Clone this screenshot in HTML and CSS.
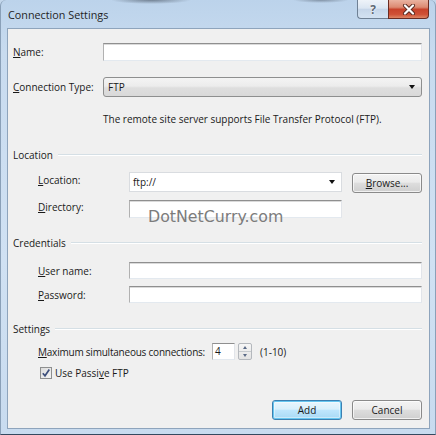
FILE: index.html
```html
<!DOCTYPE html>
<html>
<head>
<meta charset="utf-8">
<link rel="stylesheet" href="styles.css">
</head>
<body>
<div class="window">
  <div class="titlebar">
    <span class="title">Connection Settings</span>
    <div class="caption">
      <div class="cap-btn help">?</div>
      <div class="cap-btn close">
        <svg width="14" height="11" viewBox="0 0 14 11">
          <path d="M3 1.5 L11 9.5 M11 1.5 L3 9.5" stroke="#5a2a20" stroke-width="4" stroke-linecap="round"/>
          <path d="M3 1.5 L11 9.5 M11 1.5 L3 9.5" stroke="#ffffff" stroke-width="2.2" stroke-linecap="round"/>
        </svg>
      </div>
    </div>
  </div>
  <div class="client">
    <div class="row row-name">
      <span class="lbl"><u>N</u>ame:</span>
      <div class="textbox grow"></div>
    </div>
    <div class="row row-type">
      <span class="lbl"><u>C</u>onnection Type:</span>
      <div class="select grow"><span>FTP</span><i class="arrow"></i></div>
    </div>
    <p class="desc">The remote site server supports File Transfer Protocol (FTP).</p>

    <div class="group group-loc"><span>Location</span><span class="rule"></span></div>
    <div class="row sub row-loc">
      <span class="lbl2"><u>L</u>ocation:</span>
      <div class="combo"><span>ftp://</span><i class="arrow"></i></div>
      <div class="btn browse"><span><u>B</u>rowse...</span></div>
    </div>
    <div class="row sub row-dir">
      <span class="lbl2"><u>D</u>irectory:</span>
      <div class="textbox short"></div>
    </div>

    <div class="group group-cred"><span>Credentials</span><span class="rule"></span></div>
    <div class="row sub row-user">
      <span class="lbl2"><u>U</u>ser name:</span>
      <div class="textbox grow"></div>
    </div>
    <div class="row sub row-pass">
      <span class="lbl2"><u>P</u>assword:</span>
      <div class="textbox grow"></div>
    </div>

    <div class="group group-set"><span>Settings</span><span class="rule"></span></div>
    <div class="row sub row-max">
      <span class="lbl-max"><u>M</u>aximum simultaneous connections:</span>
      <div class="spin-box">4</div>
      <div class="spin-btns">
        <div class="spin-up"><i class="tri-up"></i></div>
        <div class="spin-down"><i class="tri-down"></i></div>
      </div>
      <span class="range">(1-10)</span>
    </div>
    <div class="row sub row-chk">
      <span class="checkbox">
        <svg width="10" height="10" viewBox="0 0 10 10"><path d="M1.8 5.2 L4 7.8 L8.3 1.6" fill="none" stroke="#3d4f7c" stroke-width="1.7"/></svg>
      </span>
      <span>Use Passi<u>v</u>e FTP</span>
    </div>

    <div class="buttons">
      <div class="btn default"><span>Add</span></div>
      <div class="btn"><span>Cancel</span></div>
    </div>

    <div class="watermark">DotNetCurry.com</div>
  </div>
</div>
</body>
</html>
```

FILE: styles.css
```css
* { box-sizing: border-box; }
html, body { margin: 0; padding: 0; }
body {
  width: 436px;
  height: 435px;
  overflow: hidden;
  font-family: "Open Sans", "Noto Sans", sans-serif;
  font-size: 10px;
  color: #1a1a1a;
  background: #c3d7ec;
}
u { text-decoration: underline; text-underline-offset: 1px; }

.window {
  width: 436px;
  height: 435px;
  display: flex;
  flex-direction: column;
  border: 1px solid #8aa0b8;
  border-top: none;
  border-bottom-color: #34495f;
  border-radius: 6px 6px 0 0;
  background:
    radial-gradient(ellipse 40px 4px at 150px 0, rgba(40,48,60,0.5), rgba(40,48,60,0) 100%),
    radial-gradient(ellipse 28px 3px at 320px 0, rgba(40,48,60,0.4), rgba(40,48,60,0) 100%),
    linear-gradient(180deg, #bcd3eb 0%, #c8dbef 12%, #d0e1f3 60%, #c8dbef 100%);
}

.titlebar {
  height: 28px;
  flex: none;
  display: flex;
  justify-content: space-between;
  align-items: flex-start;
  padding-left: 7px;
}
.title {
  font-size: 10.8px;
  line-height: 14px;
  margin-top: 8px;
  color: #1e1e1e;
}
.caption { display: flex; margin-right: 6px; }
.cap-btn {
  height: 19px;
  display: flex;
  align-items: center;
  justify-content: center;
}
.help {
  width: 31px;
  border: 1px solid #6f8195;
  border-top: none;
  border-right: none;
  border-radius: 0 0 0 4px;
  background: linear-gradient(180deg, #eef3f9 0%, #dbe6f2 45%, #c6d6e9 52%, #d3e2f2 100%);
  font-weight: 700;
  font-size: 12px;
  color: #5d6875;
  text-shadow: 0 0 2px #fff, 0 0 1px #fff;
}
.close {
  width: 41px;
  border: 1px solid #6a2c22;
  border-top: none;
  border-radius: 0 0 4px 0;
  background: linear-gradient(180deg, #eab3a1 0%, #dc8a72 40%, #c8432b 52%, #cf5136 80%, #de8564 100%);
}

.client {
  flex: none;
  height: 401px;
  margin: 0 5px 0 6px;
  border: 1px solid #8ea4bc;
  background: #f0f0f0;
  padding: 0 7px 0 5px;
  position: relative;
  display: flex;
  flex-direction: column;
  white-space: nowrap;
}

.row { display: flex; align-items: center; flex: none; }
.sub { padding-left: 25px; }
.lbl { width: 90px; flex: none; }
.lbl2 { width: 91px; flex: none; }
.grow { flex: 1; }

.row-name { margin-top: 14px; height: 18px; }
.row-type { margin-top: 16px; height: 20px; }
.desc { margin: 15px 0 0 90px; height: 14px; line-height: 14px; }
.group-loc { margin-top: 22px; }
.row-loc { margin-top: 10px; height: 21px; align-items: flex-start; }
.row-dir { margin-top: 7px; height: 18px; }
.group-cred { margin-top: 18px; }
.row-user { margin-top: 12px; height: 17px; }
.row-pass { margin-top: 7px; height: 17px; }
.group-set { margin-top: 19px; }
.row-max { margin-top: 7px; height: 17px; }
.row-chk { margin-top: 7px; height: 12px; }

.row-loc .lbl2 { line-height: 16px; }
.row-dir .lbl2 { align-self: flex-start; line-height: 14px; }

.group {
  display: flex;
  align-items: center;
  height: 14px;
  flex: none;
}
.rule {
  flex: 1;
  height: 2px;
  margin-left: 5px;
  border-top: 1px solid #d5dfe5;
  border-bottom: 1px solid #ffffff;
}

.textbox {
  height: 100%;
  background: #fff;
  border: 1px solid;
  border-color: #8f8f8f #e2e5ea #e3e9ef #b1b1b1;
  box-shadow: inset 0 1px 0 #dadada;
}
.textbox.short { width: 213px; flex: none; }

.arrow {
  width: 0;
  height: 0;
  border-left: 3.5px solid transparent;
  border-right: 3.5px solid transparent;
  border-top: 4px solid #111;
}

.select {
  height: 100%;
  display: flex;
  align-items: center;
  justify-content: space-between;
  padding: 0 6px 0 4px;
  border: 1px solid #8e8f8f;
  border-radius: 3px;
  background: linear-gradient(180deg, #f4f4f4 0%, #ececec 45%, #dedede 55%, #d9d9d9 100%);
}

.combo {
  width: 213px;
  height: 20px;
  flex: none;
  display: flex;
  align-items: center;
  justify-content: space-between;
  padding: 0 6px 0 3px;
  background: #fff;
  border: 1px solid #d9dce0;
}

.btn {
  width: 70px;
  height: 20px;
  flex: none;
  display: flex;
  align-items: center;
  justify-content: center;
  border: 1px solid #8a8a8a;
  border-radius: 3px;
  background: linear-gradient(180deg, #f3f3f3 0%, #ebebeb 45%, #dddddd 52%, #cfcfcf 100%);
  box-shadow: inset 0 0 0 1px rgba(255,255,255,0.7);
}
.browse { margin-left: 10px; margin-top: 1px; }
.btn.default {
  border-color: #3c7fb1;
  background: linear-gradient(180deg, #eaf6fd 0%, #d9f0fc 45%, #bee6fd 52%, #a7d9f5 100%);
  box-shadow: inset 0 0 0 1px #66c6f0, inset 0 0 0 2px rgba(255,255,255,0.4);
}

.lbl-max { width: 174px; flex: none; white-space: nowrap; letter-spacing: -0.22px; }
.spin-box {
  width: 23px;
  height: 17px;
  flex: none;
  padding-left: 2px;
  line-height: 15px;
  background: #fff;
  border: 1px solid;
  border-color: #8f8f8f #e2e5ea #e3e9ef #b1b1b1;
}
.spin-btns {
  margin-left: 3px;
  width: 14px;
  height: 17px;
  flex: none;
  display: flex;
  flex-direction: column;
  border: 1px solid #b4b8bd;
  border-radius: 2px;
  background: linear-gradient(180deg, #f6f6f6, #e3e3e3);
}
.spin-up, .spin-down {
  flex: 1;
  display: flex;
  align-items: center;
  justify-content: center;
}
.spin-up { border-bottom: 1px solid #c6cace; }
.tri-up {
  width: 0; height: 0;
  border-left: 2.5px solid transparent;
  border-right: 2.5px solid transparent;
  border-bottom: 3px solid #5a6a86;
}
.tri-down {
  width: 0; height: 0;
  border-left: 2.5px solid transparent;
  border-right: 2.5px solid transparent;
  border-top: 3px solid #5a6a86;
}
.range { margin-left: 8px; }

.checkbox {
  width: 12px;
  height: 12px;
  margin: 0 3px 0 2px;
  flex: none;
  display: flex;
  align-items: center;
  justify-content: center;
  border: 1px solid #8e8f8f;
  background: linear-gradient(135deg, #dcdcdc, #f4f4f4);
}

.buttons {
  margin-top: 21px;
  display: flex;
  justify-content: flex-end;
  gap: 10px;
  flex: none;
}

.watermark {
  position: absolute;
  left: 140px;
  top: 179px;
  font-family: "DejaVu Sans", sans-serif;
  font-size: 15.8px;
  line-height: 18px;
  color: #7c7c7c;
}
```
